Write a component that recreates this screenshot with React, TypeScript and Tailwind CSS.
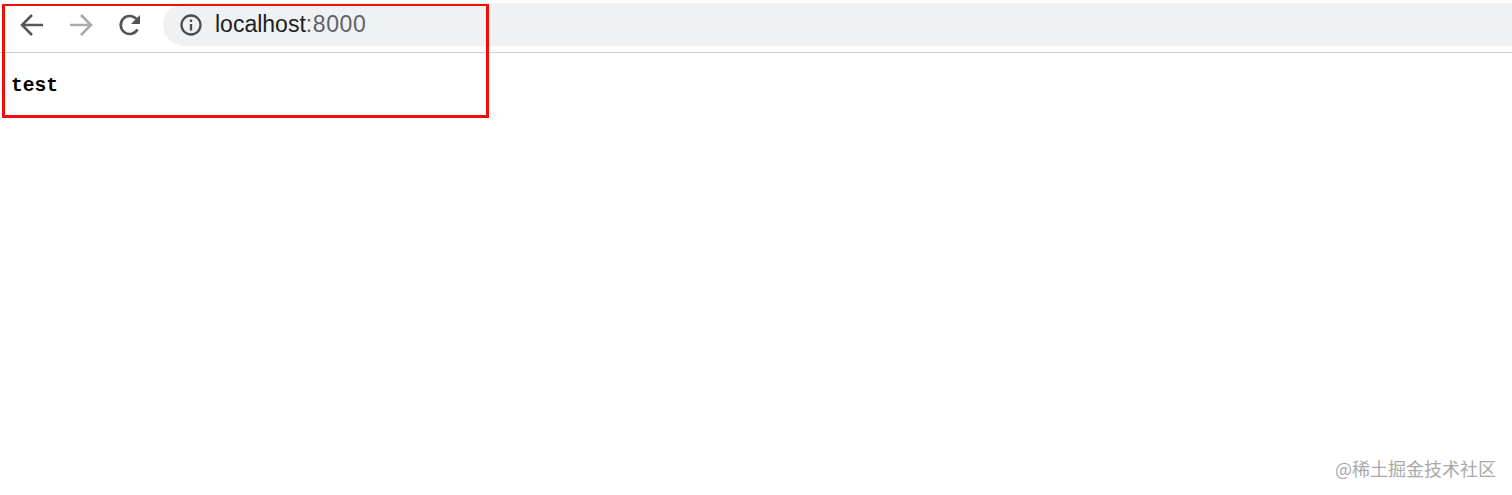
export default function App() {
  return (
    <div className="relative h-[495px] w-full overflow-hidden bg-white font-['Liberation_Sans',sans-serif]">
      <header className="flex h-[53px] items-start border-b border-[#cfd0d2] pt-[3px] pl-[20px]">
        <div className="flex h-[43px] items-center gap-[25px]">
          <svg width="24" height="24" viewBox="0 0 24 24" fill="none" stroke="#55575a" strokeWidth="2.6">
            <path d="M23 12H2M12 2 2 12l10 10" />
          </svg>
          <svg width="24" height="24" viewBox="0 0 24 24" fill="none" stroke="#a9abad" strokeWidth="2.6">
            <path d="M1 12h21M12 2l10 10-10 10" />
          </svg>
          <svg width="24" height="24" viewBox="0 0 24 24" fill="none" stroke="#515356" strokeWidth="2.6">
            <path d="M19.5 16.5A9 9 0 1 1 18.5 6" />
            <path d="M22 2v9h-9z" fill="#515356" stroke="none" />
          </svg>
        </div>
        <div className="ml-[21px] flex h-[43px] flex-1 items-center rounded-l-[22px] bg-[#eff1f3] pl-[17px]">
          <svg width="22" height="22" viewBox="0 0 22 22" fill="none" stroke="#4a4c4f" strokeWidth="2.3">
            <circle cx="11" cy="11" r="9.5" />
            <path d="M11 10v6.5M11 5.5v2.5" />
          </svg>
          <span className="ml-[13px] text-[23px] text-[#202124]">
            localhost<span className="tracking-[0.6px] text-[#5f6368]">:8000</span>
          </span>
        </div>
      </header>
      <main className="pt-[23px] pl-[11px] font-['Liberation_Mono',monospace] text-[19.6px] leading-5 font-bold text-black">
        test
      </main>
      <div className="absolute top-[4px] left-[2px] h-[114px] w-[487px] border-x-[3px] border-t-2 border-b-[3px] border-[#f20d0d]" />
      <div className="absolute top-[456px] right-[16px] font-['Noto_Sans_CJK_SC',sans-serif] text-[18px] leading-6 text-[#a9a9a9]">
        @稀土掘金技术社区
      </div>
    </div>
  );
}
